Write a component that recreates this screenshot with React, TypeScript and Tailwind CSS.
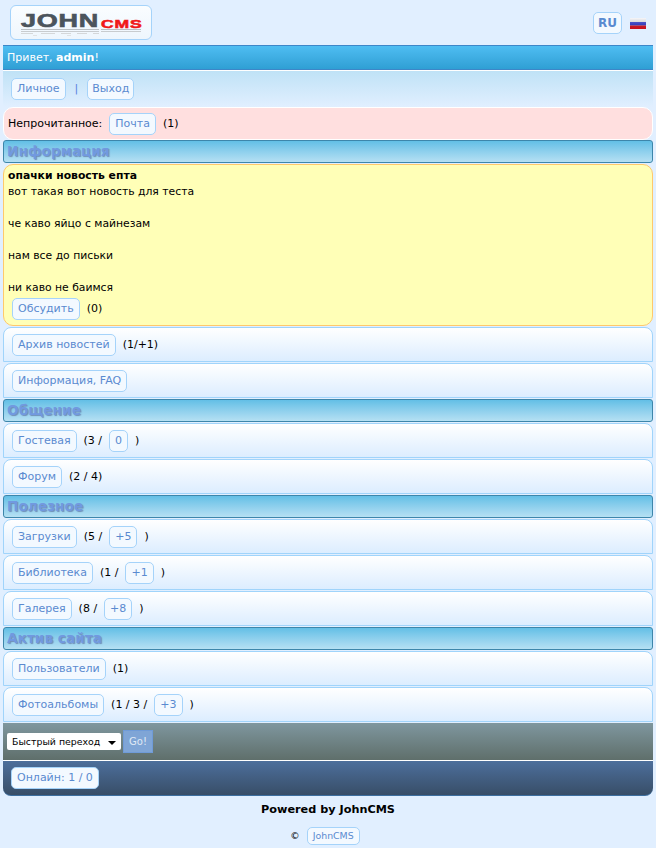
import React from 'react';

const font = { fontFamily: '"DejaVu Sans", Verdana, sans-serif' };

const Btn = ({ children, className = '' }: { children: React.ReactNode; className?: string }) => (
  <a className={`inline-block h-[22px] leading-[20px] px-[5px] border border-[#a5d3fa] rounded-[5px] bg-[#f3f9ff] text-[#5a8ad0] ${className}`}>
    {children}
  </a>
);

const Section = ({ children }: { children: React.ReactNode }) => (
  <div className="h-[23px] leading-[21px] pl-[3px] border border-[#3d86ab] rounded-[3px] bg-gradient-to-b from-[#62bfe6] to-[#b5e0f3] text-[13.7px] font-bold text-[#7199e0] [text-shadow:1px_1px_1px_#6f8fb8]">
    {children}
  </div>
);

const Row = ({ children }: { children: React.ReactNode }) => (
  <div className="h-[35px] flex items-center pl-[8px] whitespace-pre border border-[#a0d4fb] rounded-tl-[8px] rounded-tr-[8px] bg-gradient-to-b from-white to-[#dcedff]">
    {children}
  </div>
);

const Logo = () => (
  <div className="w-[142px] h-[35px] ml-[7px] mt-[5px] border border-[#a5d3fa] rounded-[6px] bg-gradient-to-b from-[#fafdff] to-[#eef6fd] relative overflow-hidden">
    <span className="absolute left-[10px] top-[5px] text-[#4b545c] text-[18px] leading-[20px] font-bold tracking-[0.5px] [font-family:'Liberation_Sans',sans-serif] [-webkit-text-stroke:0.6px_#4b545c] scale-x-[1.5] origin-left">
      JOHN
    </span>
    <span className="absolute left-[90px] top-[11px] text-[#f01818] text-[11px] leading-[14px] font-bold tracking-[0.5px] [font-family:'Liberation_Sans',sans-serif] [-webkit-text-stroke:0.5px_#f01818] scale-x-[1.6] origin-left">
      CMS
    </span>
    <svg className="absolute left-[10px] top-[22px]" width="122" height="10" viewBox="0 0 122 10">
      <path d="M0 1.5H78M80 1.5H120" stroke="#b9bec2" strokeWidth="1" />
      <path d="M0 3.5H78M80 3.5H120" stroke="#c8cccf" strokeWidth="1" />
      <path d="M0 5.5H12M20 5.5H34M40 5.5H50M56 5.5H66M72 5.5H78" stroke="#d4d7d9" strokeWidth="1" />
      <path d="M12 7.5H16M46 7.5H50" stroke="#dfe2e4" strokeWidth="1" />
    </svg>
  </div>
);

const Flag = () => (
  <svg width="16" height="11" viewBox="0 0 16 11" className="block">
    <defs>
      <linearGradient id="flagShade" x1="0" y1="0" x2="0" y2="1">
        <stop offset="0" stopColor="#ffffff" stopOpacity="0.4" />
        <stop offset="1" stopColor="#000000" stopOpacity="0.1" />
      </linearGradient>
    </defs>
    <rect width="16" height="4" fill="#f2f2f6" />
    <rect y="4" width="16" height="3.5" fill="#2a35d8" />
    <rect y="7.5" width="16" height="3.5" fill="#e01020" />
    <rect width="16" height="11" fill="url(#flagShade)" />
  </svg>
);

export default function App() {
  return (
    <div style={font} className="min-h-[848px] bg-[#e1efff] px-[3px] text-[11px] leading-[16px] text-black">
      <div className="h-[45px] flex justify-between items-start">
        <Logo />
        <div className="flex items-center mt-[12px] mr-[7px] gap-[8px]">
          <a className="h-[22px] leading-[20px] px-[4px] border border-[#a5d3fa] rounded-[5px] bg-[#f3f9ff] text-[12px] text-[#5a8ad0] font-bold">RU</a>
          <Flag />
        </div>
      </div>

      <div className="h-[25px] leading-[24px] pl-[4px] border-y border-[#3d86c8] bg-gradient-to-b from-[#4ebdf2] to-[#2f9fd4] text-white">
        Привет, <b>admin</b>!
      </div>
      <div className="h-[37px] border-t border-white flex items-center pl-[8px] text-[#5a80e0] bg-gradient-to-b from-[#bfe2f6] to-[#e1efff]">
        <Btn>Личное</Btn>
        <span className="mx-[9px]">|</span>
        <Btn className="!px-[4px]">Выход</Btn>
      </div>
      <div className="h-[33px] flex items-center pl-[4px] whitespace-pre border border-white rounded-[10px] bg-[#ffdfdf]">
        Непрочитанное:  <Btn>Почта</Btn>  (1)
      </div>

      <div className="flex flex-col gap-px">
        <Section>Информация</Section>
        <div className="h-[162px] pl-[4px] pt-[3px] border border-[#ffc96b] rounded-[10px] bg-[#ffffb7] text-[10.8px]">
          <div className="font-bold">опачки новость епта</div>
          <div>вот такая вот новость для теста</div>
          <div className="h-[16px]" />
          <div>че каво яйцо с майнезам</div>
          <div className="h-[16px]" />
          <div>нам все до письки</div>
          <div className="h-[16px]" />
          <div>ни каво не баимся</div>
          <div className="mt-[2px] pl-[4px] whitespace-pre text-[11px]">
            <Btn>Обсудить</Btn>  (0)
          </div>
        </div>
        <Row>
          <Btn>Архив новостей</Btn>  (1/+1)
        </Row>
        <Row>
          <Btn>Информация, FAQ</Btn>
        </Row>
        <Section>Общение</Section>
        <Row>
          <Btn>Гостевая</Btn>  (3 /  <Btn>0</Btn>  )
        </Row>
        <Row>
          <Btn>Форум</Btn>  (2 / 4)
        </Row>
        <Section>Полезное</Section>
        <Row>
          <Btn>Загрузки</Btn>  (5 /  <Btn>+5</Btn>  )
        </Row>
        <Row>
          <Btn>Библиотека</Btn>  (1 /  <Btn>+1</Btn>  )
        </Row>
        <Row>
          <Btn>Галерея</Btn>  (8 /  <Btn>+8</Btn>  )
        </Row>
        <Section>Актив сайта</Section>
        <Row>
          <Btn>Пользователи</Btn>  (1)
        </Row>
        <Row>
          <Btn>Фотоальбомы</Btn>  (1 / 3 /  <Btn>+3</Btn>  )
        </Row>
      </div>

      <div className="h-[38px] mt-px border-b border-white flex items-center pl-[4px] bg-gradient-to-b from-[#7f979f] to-[#5f6f6b]">
        <div className="relative w-[114px] h-[17px] bg-white rounded-[2px] text-[9.4px] leading-[17px] pl-[5px]">
          Быстрый переход
          <span className="absolute right-[5px] top-[8px] w-0 h-0 border-x-[4px] border-x-transparent border-t-[4px] border-t-black" />
        </div>
        <div className="ml-[2px] w-[30px] h-[23px] border border-[#6f9bd8] bg-[#7fa5d6] text-[#dfe9f5] text-[10px] leading-[21px] text-center">
          Go!
        </div>
      </div>
      <div className="h-[35px] flex items-center pl-[8px] rounded-bl-[8px] rounded-br-[8px] border-b border-[#3d6fa0] bg-gradient-to-b from-[#4d6f9c] to-[#384e68]">
        <Btn>Онлайн: 1 / 0</Btn>
      </div>

      <div className="mt-[6px] text-center font-bold text-[11.25px]">Powered by JohnCMS</div>
      <div className="mt-[9px] pr-[6px] flex justify-center items-center text-[9.4px] gap-[7px]">
        <span>©</span>
        <a className="h-[18px] leading-[16px] px-[5px] border border-[#a5d3fa] rounded-[5px] bg-[#f3f9ff] text-[#5a8ad0]">JohnCMS</a>
      </div>
    </div>
  );
}
